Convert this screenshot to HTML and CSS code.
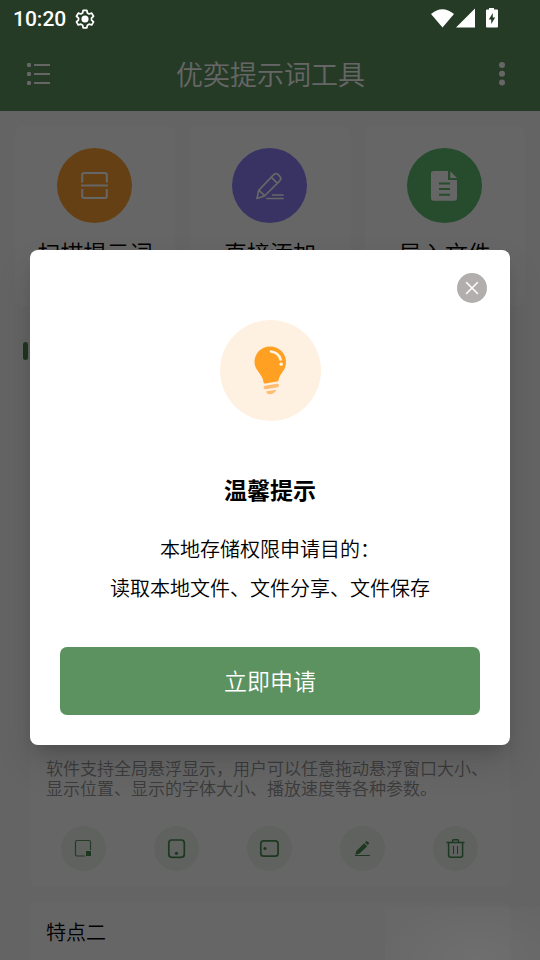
FILE: index.html
```html
<!DOCTYPE html>
<html lang="zh-CN">
<head>
<meta charset="utf-8">
<title>优奕提示词工具</title>
<link rel="stylesheet" href="styles.css">
</head>
<body>
<div class="screen">
  <div class="app">
    <header class="topbar">
      <svg class="menu" width="26" height="24" viewBox="0 0 26 24"><g fill="#fff"><rect x="1" y="1" width="4" height="4" rx="1.2"/><rect x="1" y="10" width="4" height="4" rx="1.2"/><rect x="1" y="19" width="4" height="4" rx="1.2"/><rect x="8" y="2" width="16" height="2"/><rect x="8" y="11" width="16" height="2"/><rect x="8" y="20" width="16" height="2"/></g></svg>
      <h1>优奕提示词工具</h1>
      <svg class="more" width="8" height="24" viewBox="0 0 8 24" fill="#fff"><circle cx="4" cy="3" r="3"/><circle cx="4" cy="11.8" r="3"/><circle cx="4" cy="20.6" r="3"/></svg>
    </header>
    <main>
      <section class="actions">
        <div class="action">
          <div class="disc orange"><svg width="75" height="75" viewBox="0 0 75 75" fill="none" stroke="#fff" stroke-width="2"><path d="M25.200 34.500V27q0-2 2-2h20.600q2 0 2 2v7.500M25.200 41v7q0 2 2 2h20.600q2 0 2-2v-7M24 37.600h27"/></svg></div>
          <span>扫描提示词</span>
        </div>
        <div class="action">
          <div class="disc purple"><svg width="75" height="75" viewBox="0 0 75 75" fill="none" stroke="#fff" stroke-width="1.700" stroke-linejoin="round" stroke-linecap="round"><path d="M25 50.500l1.700-8.200 15-15.600q2.200-2 4.500 0l1.600 1.600q2 2.200 0 4.500L32.500 48zM39.200 29.200l6.300 6.100M27.500 42.800l5 4.800M35 50.500h16M40.500 47h10.500"/></svg></div>
          <span>直接添加</span>
        </div>
        <div class="action">
          <div class="disc green"><svg width="75" height="75" viewBox="0 0 75 75"><path fill="#fff" d="M26.500 23H41v9h9v18q0 2.700-2.700 2.700h-20.600Q24 52.700 24 50V25.700Q24 23 26.500 23z"/><path fill="#fff" d="M43.300 23.200l6.700 6.800h-6.700z"/><path stroke="#5fbf70" stroke-width="1.900" d="M32 35.500h11M32 41h11M32 46.800h11"/></svg></div>
          <span>导入文件</span>
        </div>
      </section>
      <div class="section-head"><i class="marker"></i></div>
      <section class="feature first">
        <p>软件支持全局悬浮显示，用户可以任意拖动悬浮窗口大小、显示位置、显示的字体大小、播放速度等各种参数。</p>
        <div class="tools">
          <div class="tool"><svg width="45" height="45" viewBox="0 0 45 45" fill="none" stroke="#5d9360"><path stroke-width="1.200" d="M24 30H16q-1.500 0-1.500-1.500V16q0-1.500 1.500-1.500h12q1.500 0 1.500 1.500v8"/><rect x="25" y="25" width="5" height="5" fill="#4b8a50" stroke="none"/></svg></div>
          <div class="tool"><svg width="45" height="45" viewBox="0 0 45 45" fill="none" stroke="#4b8a50" stroke-width="1.700"><rect x="14.800" y="14" width="15.500" height="17.300" rx="3"/><circle cx="22.500" cy="27.300" r="1.600" fill="#4b8a50" stroke="none"/></svg></div>
          <div class="tool"><svg width="45" height="45" viewBox="0 0 45 45" fill="none" stroke="#4b8a50" stroke-width="1.700"><rect x="13.800" y="14.900" width="17.300" height="15.300" rx="3"/><circle cx="18" cy="22.500" r="1.600" fill="#4b8a50" stroke="none"/></svg></div>
          <div class="tool"><svg width="45" height="45" viewBox="0 0 45 45"><path fill="#4b8a50" d="M15.300 28.700l1-3.800 7.900-7.700 3 3-8 7.600zM24.900 16.500l1.200-1.100q.7-.7 1.400 0l1.200 1.200q.7.700 0 1.400l-1 1.100z"/><path stroke="#4b8a50" stroke-width="1" d="M15 29.500h15"/></svg></div>
          <div class="tool"><svg width="45" height="45" viewBox="0 0 45 45" fill="none" stroke="#4b8a50" stroke-width="1.500"><path d="M13.500 16.600h18M19.500 16v-1q0-1.200 1.200-1.200h3.600q1.200 0 1.200 1.200v1M15.600 17v12.200q0 2 2 2h10q2 0 2-2V17"/><path stroke-width="1" d="M20.500 20v8M24.500 20v8"/></svg></div>
        </div>
      </section>
      <section class="feature second"><h2>特点二</h2></section>
    </main>
  </div>
  <div class="mask"></div>
  <div class="glow"></div>
  <div class="status">
    <span class="clock">10:20</span>
    <svg class="gear" width="22" height="22" viewBox="0 0 24 24" fill="none" stroke="#fff" stroke-width="1.900" stroke-linejoin="round"><path d="M10 2.500h4l.6 2.900 1.900 1.100 2.800-.9 2 3.400-2.200 2v2.100l2.200 2-2 3.400-2.800-.9-1.900 1.100-.6 2.900h-4l-.6-2.900-1.900-1.100-2.800.9-2-3.400 2.200-2V11l-2.200-2 2-3.400 2.800.9 1.900-1.100z"/><circle cx="12" cy="12" r="3.900" fill="#fff" stroke="none"/></svg>
    <svg class="signals" width="68" height="22" viewBox="0 0 68 22" fill="#fff"><path d="M0 6Q11.300-3.500 23 6L11.500 19.500z"/><path d="M44 .5V19.500H25z"/><path fill-rule="evenodd" d="M56 1.500h2V0h5v1.500h3q1 0 1 1v16q0 1-1 1H56q-1 0-1-1v-16q0-1 1-1zM61.800 5l-4 6.500h2.400V16l4-6.500h-2.400z"/></svg>
  </div>
  <div class="dialog" role="dialog">
    <button class="close" aria-label="关闭"><svg width="30" height="30" viewBox="0 0 30 30"><path stroke="#fff" stroke-width="1.500" stroke-linecap="round" d="M9.500 9.500l11 11M20.500 9.500l-11 11"/></svg></button>
    <div class="bulb"><svg width="101" height="101" viewBox="0 0 101 101"><path fill="#ffa023" d="M50 26.500c9.200 0 16 7 16 15.300 0 9.700-6.400 11.200-7.400 18.200q-.2 1.300-1.500 1.500l-12 2q-1.400.2-1.600-1.200C42.800 53.700 34.500 51 34.500 41.800 34.500 33.500 41 26.500 50 26.500z"/><path stroke="#fff4df" stroke-width="2.600" stroke-linecap="round" fill="none" d="M51 31.500q7.500 1 9.700 8"/><circle cx="61.200" cy="44.300" r="1.700" fill="#fff4df"/><path stroke="#ffbd72" stroke-width="3.300" stroke-linecap="round" d="M45.300 67.500l12-2"/><path fill="#ffbd72" d="M46.800 71.200l8.600-1.300q1.300 0 .5 1.200-2.500 3.500-5.500 3.200-2.800 0-4-1.900-.5-1 .4-1.200z"/></svg></div>
    <h3>温馨提示</h3>
    <p>本地存储权限申请目的：<br>读取本地文件、文件分享、文件保存</p>
    <button class="apply">立即申请</button>
  </div>
</div>
</body>
</html>
```
FILE: styles.css
```css
* { box-sizing: border-box; }
body, h1, h2, h3, p { margin: 0; }
body { font-family: Roboto, "Noto Sans CJK SC", sans-serif; font-weight: 350; color: #000; }
button { border: 0; padding: 0; font-family: inherit; font-weight: inherit; }
svg { display: block; }

.screen { position: relative; width: 540px; height: 960px; overflow: hidden; }
.app { height: 960px; background: #fafafa; }

.topbar {
  display: flex;
  align-items: center;
  justify-content: space-between;
  height: 111px;
  padding: 37px 34px 0 26px;
  background: #5d9360;
  color: #fff;
}
.topbar h1 { font-size: 27px; font-weight: inherit; line-height: 40px; margin: 3px 9px 0 0; }

.actions {
  display: grid;
  grid-template-columns: repeat(3, 160px);
  gap: 15px;
  padding: 15px 15px 0;
}
.action {
  display: flex;
  flex-direction: column;
  align-items: center;
  height: 180px;
  padding-top: 22px;
  border-radius: 8px;
  background: #fff;
}
.action span { margin-top: 15px; font-size: 23px; line-height: 34px; }
.disc { width: 75px; height: 75px; margin-right: 1px; border-radius: 50%; }
.orange { background: #ffa035; }
.purple { background: #8f80fa; }
.green { background: #5fbf70; }

.section-head { padding: 36px 23px 0; height: 84px; }
.marker { display: block; width: 5px; height: 18px; border-radius: 3px; background: #4b8a50; }

.feature { margin: 0 30px; padding: 0 16px; border-radius: 8px; background: #fff; }
.first { height: 497px; padding-top: 369px; }
.first p { width: 445px; font-size: 17px; line-height: 20px; color: #949494; }
.tools { display: flex; justify-content: space-between; padding: 27px 15px 0; margin-right: 1px; }
.tool { width: 45px; height: 45px; border-radius: 50%; background: #edf4ed; }
.second { margin-top: 15px; height: 70px; padding-top: 16px; }
.second h2 { font-size: 20px; font-weight: inherit; line-height: 30px; }

.mask { position: absolute; inset: 0; background: rgba(0, 0, 0, .6); }
.glow {
  position: absolute;
  left: 385px;
  top: 907px;
  width: 155px;
  height: 53px;
  background: radial-gradient(ellipse at 60% 100%, rgba(255, 255, 255, .06), rgba(255, 255, 255, .01) 80%);
}

.status { position: absolute; top: 0; left: 0; width: 540px; height: 37px; display: flex; align-items: center; padding: 0 41px 0 13px; color: #fff; }
.clock { font-size: 21px; font-weight: 500; line-height: 37px; padding-top: 1px; }
.gear { margin-left: 8px; }
.signals { margin-left: auto; }

.dialog {
  position: absolute;
  left: 30px;
  top: 250px;
  width: 480px;
  height: 495px;
  padding: 70px 30px 0;
  border-radius: 8px;
  background: #fff;
  text-align: center;
  box-shadow: 0 11px 15px -7px rgba(0, 0, 0, .16), 0 18px 34px 1px rgba(0, 0, 0, .12);
}
.close { position: absolute; top: 23px; right: 23px; width: 30px; height: 30px; border-radius: 50%; background: #b1aead; }
.bulb { width: 101px; height: 101px; margin: 0 auto; border-radius: 50%; background: #fff1e1; }
.dialog h3 { margin-top: 54px; font-size: 23px; font-weight: 700; line-height: 34px; }
.dialog p { margin-top: 22px; font-size: 20px; line-height: 39px; }
.apply { display: block; width: 420px; height: 68px; margin-top: 38px; padding-bottom: 2px; border-radius: 7px; background: #5b925f; color: #fff; font-size: 23px; }
```
